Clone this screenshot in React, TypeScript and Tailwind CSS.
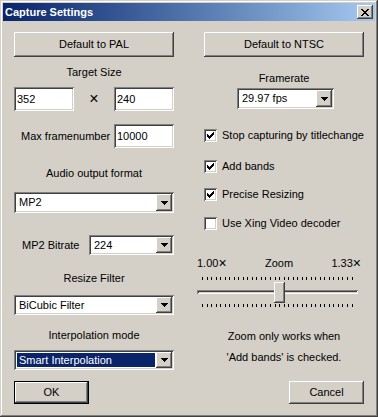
import React from 'react';

const raised =
  'shadow-[inset_-1px_-1px_#404040,inset_1px_1px_#ffffff,inset_-2px_-2px_#808080,inset_2px_2px_#d4d0c8]';
const sunken =
  'shadow-[inset_1px_1px_#808080,inset_-1px_-1px_#ffffff,inset_2px_2px_#404040,inset_-2px_-2px_#d4d0c8]';

const Arrow = () => (
  <svg width="7" height="4" viewBox="0 0 7 4" shapeRendering="crispEdges">
    <path d="M0 0H7V1H6V2H5V3H4V4H3V3H2V2H1V1H0Z" fill="#000" />
  </svg>
);

const Combo = ({
  value,
  className,
  selected,
}: {
  value: string;
  className: string;
  selected?: boolean;
}) => (
  <div className={`flex bg-white p-[2px] ${sunken} ${className}`}>
    <div className="flex-1 flex items-stretch py-[1px] pl-[1px] pr-[1px]">
      <div
        className={
          selected
            ? 'w-full flex items-center pl-[2px] bg-[#0a246a] text-white'
            : 'w-full flex items-center pl-[2px]'
        }
      >
        {value}
      </div>
    </div>
    <div className={`w-[16px] bg-[#d4d0c8] flex items-center justify-center ${raised}`}>
      <Arrow />
    </div>
  </div>
);

const Edit = ({ value, className }: { value: string; className: string }) => (
  <div className={`h-[24px] bg-white flex items-center pl-[3px] ${sunken} ${className}`}>
    {value}
  </div>
);

const Check = ({ label, checked, className }: { label: string; checked: boolean; className: string }) => (
  <div className={`flex items-center h-[13px] ${className}`}>
    <div className={`w-[13px] h-[13px] bg-white flex items-center justify-center ${sunken}`}>
      {checked && (
        <svg width="13" height="13" viewBox="0 0 13 13" shapeRendering="crispEdges">
          <path d="M3 5H4V6H5V7H6V6H7V5H8V4H9V3H10V6H9V7H8V8H7V9H6V10H5V9H4V8H3Z" fill="#000" />
        </svg>
      )}
    </div>
    <span className="ml-[5px]">{label}</span>
  </div>
);

const Ticks = ({ className }: { className: string }) => (
  <div className={`flex justify-between w-[151px] ml-[5px] ${className}`}>
    {Array.from({ length: 34 }).map((_, i) => (
      <div key={i} className="w-px h-full bg-black" />
    ))}
  </div>
);

export default function App() {
  return (
    <div
      className="w-[378px] h-[417px] bg-[#d4d0c8] p-[3px] flex flex-col text-[11px] text-black shadow-[inset_-1px_-1px_#404040,inset_1px_1px_#d4d0c8,inset_-2px_-2px_#808080,inset_2px_2px_#ffffff]"
      style={{ fontFamily: '"Liberation Sans", Arial, sans-serif' }}
    >
      {/* Title bar */}
      <div className="h-[18px] flex items-center pl-[2px] pr-[2px] bg-gradient-to-r from-[#0a246a] to-[#a6caf0]">
        <span className="text-white font-bold text-[11px]">Capture Settings</span>
        <div className={`ml-auto w-[16px] h-[14px] bg-[#d4d0c8] flex items-center justify-center ${raised}`}>
          <svg width="8" height="7" viewBox="0 0 8 7" shapeRendering="crispEdges">
            <path
              d="M0 0H2V1H3V2H5V1H6V0H8V1H7V2H6V3H5V4H6V5H7V6H8V7H6V6H5V5H3V6H2V7H0V6H1V5H2V4H3V3H2V2H1V1H0Z"
              fill="#000"
            />
          </svg>
        </div>
      </div>

      {/* Body */}
      <div className="flex-1 flex px-[11px] gap-[30px]">
        {/* Left column */}
        <div className="w-[160px] flex flex-col">
          <div className={`mt-[11px] h-[25px] flex items-center justify-center ${raised}`}>Default to PAL</div>

          <div className="mt-[9px] h-[13px] leading-[13px] text-center">Target Size</div>
          <div className="mt-[8px] flex items-center">
            <Edit value="352" className="w-[60px]" />
            <span className="flex-1 text-center text-[16px] leading-[16px]">×</span>
            <Edit value="240" className="w-[60px]" />
          </div>

          <div className="mt-[13px] flex items-center">
            <span className="ml-[7px]">Max framenumber</span>
            <Edit value="10000" className="w-[60px] ml-auto" />
          </div>

          <div className="mt-[19px] h-[13px] leading-[13px] text-center">Audio output format</div>
          <Combo value="MP2" className="mt-[12px] h-[21px]" />

          <div className="mt-[22px] flex items-center">
            <span className="ml-[8px]">MP2 Bitrate</span>
            <Combo value="224" className="ml-auto w-[85px] h-[20px]" />
          </div>

          <div className="mt-[17px] h-[13px] leading-[13px] text-center">Resize Filter</div>
          <Combo value="BiCubic Filter" className="mt-[10px] h-[20px]" />

          <div className="mt-[14px] h-[13px] leading-[13px] text-center">Interpolation mode</div>
          <Combo value="Smart Interpolation" className="mt-[8px] h-[20px]" selected />

          <div
            className={`mt-[11px] w-[75px] h-[23px] border border-black flex items-center justify-center ${raised}`}
          >
            OK
          </div>
        </div>

        {/* Right column */}
        <div className="w-[160px] flex flex-col">
          <div className={`mt-[11px] h-[25px] flex items-center justify-center ${raised}`}>Default to NTSC</div>

          <div className="mt-[15px] h-[13px] leading-[13px] text-center">Framerate</div>
          <Combo value="29.97 fps" className="mt-[3px] ml-[33px] w-[97px] h-[21px]" />

          <Check label="Stop capturing by titlechange" checked className="mt-[20px]" />
          <Check label="Add bands" checked className="mt-[18px]" />
          <Check label="Precise Resizing" checked className="mt-[15px]" />
          <Check label="Use Xing Video decoder" checked={false} className="mt-[16px]" />

          {/* Zoom slider */}
          <div className="-ml-[7px] w-[167px] flex flex-col">
            <div className="mt-[27px] h-[13px] flex items-center justify-between pr-[3px]">
              <span>
                1.00<span className="text-[14px] align-[-1px]">×</span>
              </span>
              <span>Zoom</span>
              <span>
                1.33<span className="text-[14px] align-[-1px]">×</span>
              </span>
            </div>
            <Ticks className="mt-[7px] h-[3px]" />
            <div className="relative mt-[2px] h-[21px] w-[161px]">
              <div className={`mt-[8px] h-[4px] ${sunken}`} />
              <div className={`absolute left-[77px] top-0 w-[11px] h-[21px] bg-[#d4d0c8] ${raised}`} />
            </div>
            <Ticks className="mt-[1px] h-[3px]" />
          </div>

          <div className="mt-[23px] h-[13px] leading-[13px] text-center">Zoom only works when</div>
          <div className="mt-[8px] h-[13px] leading-[13px] text-center">'Add bands' is checked.</div>

          <div className={`mt-[17px] self-end w-[75px] h-[23px] flex items-center justify-center ${raised}`}>
            Cancel
          </div>
        </div>
      </div>
    </div>
  );
}
